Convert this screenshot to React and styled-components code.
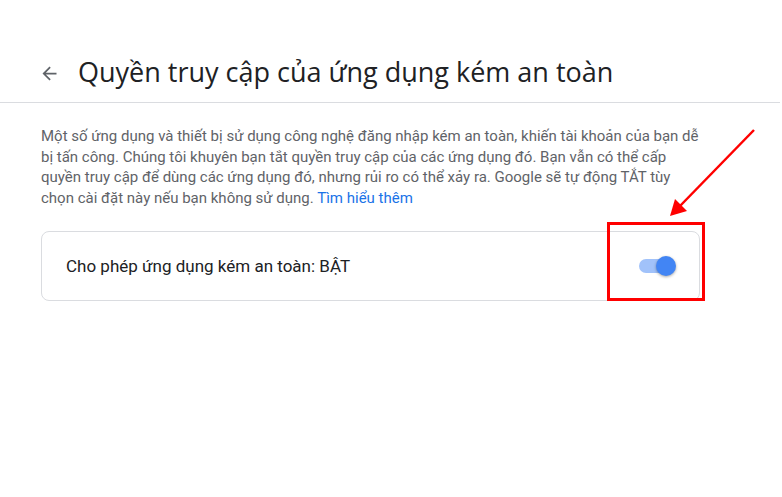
import styled, { createGlobalStyle } from 'styled-components'

let GlobalStyle = createGlobalStyle`
    body {
        margin:0;
        background:#fff;
        font-family:Roboto, "Noto Sans", Arial, sans-serif;
    }
`

let Page = styled.div`
    position:relative;
    width:782px;
    height:497px;
    overflow:hidden;
`

let Header = styled.header`
    display:flex;
    align-items:center;
    gap:17px;
    height:53px;
    margin-top:49px;
    padding-left:38px;
    margin-right:2px;
    border-bottom:1px solid #dadce0;
`

let BackButton = styled.button`
    display:flex;
    align-items:center;
    justify-content:center;
    border:none;
    background:none;
    padding:0;
    width:23px;
    height:23px;
    margin-top:-4px;
    color:#5f6368;
    cursor:pointer;
`

let Title = styled.h1`
    margin:0;
    margin-top:-8px;
    font-family:"Open Sans", "Noto Sans", sans-serif;
    font-weight:400;
    font-size:27px;
    color:#202124;
`

let Content = styled.main`
    padding:23px 0 0 41px;
    width:659px;
`

let Description = styled.p`
    margin:0;
    font-size:15px;
    line-height:20.5px;
    color:#5f6368;
`

let Link = styled.a`
    color:#1a73e8;
    text-decoration:none;
`

let SettingCard = styled.div`
    display:flex;
    align-items:center;
    justify-content:space-between;
    margin-top:23px;
    height:68px;
    padding:0 26px 0 24px;
    border:1px solid #dadce0;
    border-radius:8px;
`

let SettingLabel = styled.span`
    font-size:17px;
    color:#202124;
`

let Switch = styled.div`
    position:relative;
    width:34px;
    height:14px;
    border-radius:7px;
    background:${props => props.on ? '#a1c2fa' : '#bdc1c6'};
`

let Thumb = styled.span`
    position:absolute;
    top:-3px;
    left:${props => props.on ? '17px' : '-3px'};
    width:20px;
    height:20px;
    border-radius:50%;
    background:${props => props.on ? '#4285f4' : '#fff'};
    box-shadow:0 1px 3px rgba(0,0,0,0.35);
`

let Highlight = styled.div`
    position:absolute;
    left:607px;
    top:222px;
    width:92px;
    height:73px;
    border:3px solid #f00;
`

let ArrowLayer = styled.svg`
    position:absolute;
    left:0;
    top:0;
    pointer-events:none;
`

export default function App() {
    return (
        <Page>
            <GlobalStyle />
            <Header>
                <BackButton aria-label="Quay lại">
                    <svg width="21" height="21" viewBox="0 0 24 24">
                        <path d="M20 11H7.83l5.59-5.59L12 4l-8 8 8 8 1.41-1.41L7.83 13H20v-2z" fill="currentColor" />
                    </svg>
                </BackButton>
                <Title>Quyền truy cập của ứng dụng kém an toàn</Title>
            </Header>

            <Content>
                <Description>
                    Một số ứng dụng và thiết bị sử dụng công nghệ đăng nhập kém an toàn, khiến tài khoản của bạn dễ bị tấn công. Chúng tôi khuyên bạn tắt quyền truy cập của các ứng dụng đó. Bạn vẫn có thể cấp quyền truy cập để dùng các ứng dụng đó, nhưng rủi ro có thể xảy ra. Google sẽ tự động TẮT tùy chọn cài đặt này nếu bạn không sử dụng. <Link href="#">Tìm hiểu thêm</Link>
                </Description>

                <SettingCard>
                    <SettingLabel>Cho phép ứng dụng kém an toàn: BẬT</SettingLabel>
                    <Switch on>
                        <Thumb on />
                    </Switch>
                </SettingCard>
            </Content>

            {/* annotation overlay */}
            <Highlight />
            <ArrowLayer width="782" height="497">
                <line x1="754" y1="130" x2="680" y2="206" stroke="#f00" strokeWidth="2.5" />
                <polygon points="670,216 675,199 687,211" fill="#f00" />
            </ArrowLayer>
        </Page>
    )
}
